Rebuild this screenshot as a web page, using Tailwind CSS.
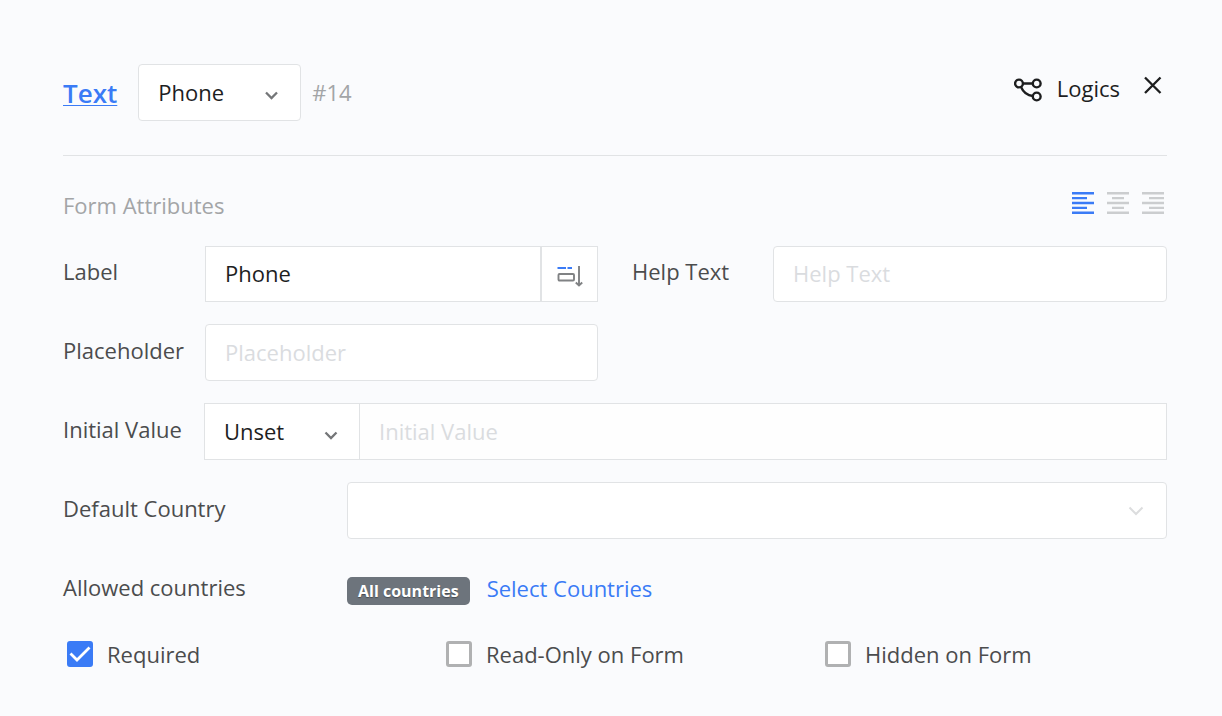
<!DOCTYPE html>
<html lang="en">
<head>
  <meta charset="UTF-8"/>
  <meta name="viewport" content="width=device-width,initial-scale=1.0"/>
  <title>Field Settings – Phone</title>
  <script src="https://cdn.jsdelivr.net/npm/@tailwindcss/browser@4"></script>
</head>
<body class="bg-[#fafbfd] text-[#4b4c4d] font-['Open_Sans',sans-serif] text-[22px] leading-8">

  <form class="pl-[63px] pr-[55px] pt-16 pb-11">

    <!-- HEADER -->
    <header class="flex items-center pb-[34px] border-b border-[#e1e3e5]">
      <a href="#" class="text-[26px] font-semibold text-[#3a7bf6] underline decoration-1 underline-offset-2 mr-[21px]">Text</a>
      <div class="relative">
        <select id="fieldType" aria-label="Field type"
                class="appearance-none w-[163px] h-[57px] pl-[19px] pb-0.5 bg-white border border-[#e1e3e5] rounded text-[#1d1e1f]">
          <option>Phone</option>
          <option>Text</option>
        </select>
        <svg class="absolute right-[22px] top-[26px] w-[14px] h-[10px] pointer-events-none" viewBox="0 0 14 10" fill="none" stroke="#747678" stroke-width="2.300">
          <path d="M1 2.500L6.500 8L12 2.500"/>
        </svg>
      </div>
      <span class="ml-[11px] pb-0.5 text-[#a3a5a7]">#14</span>

      <div class="flex items-center ml-auto pb-2 text-[#1d1e1f]">
        <button type="button" class="flex items-center gap-[15px]">
          <svg class="w-7 h-[26px]" viewBox="0 0 28 26" fill="none" stroke="#1d1e1f" stroke-width="2.400">
            <circle cx="5" cy="7.500" r="3.900"/>
            <circle cx="22.700" cy="7.500" r="3.900"/>
            <circle cx="22.700" cy="20.500" r="3.900"/>
            <path d="M9 7.500H18.800M7 11C9 15.500 13 19.500 18.800 20"/>
          </svg>
          <span class="pb-0.5">Logics</span>
        </button>
        <button type="button" aria-label="Close" class="ml-6 mr-[5px] pb-2">
          <svg class="w-[18px] h-[18px]" viewBox="0 0 18 18" fill="none" stroke="#1d1e1f" stroke-width="2.300">
            <path d="M1 1.500L16.500 17M16.500 1.500L1 17"/>
          </svg>
        </button>
      </div>
    </header>

    <!-- SECTION TITLE + ALIGNMENT -->
    <div class="flex items-center justify-between pt-[33px] pb-[23px]">
      <h2 class="pb-0.5 text-[#a3a5a7]">Form Attributes</h2>
      <div class="flex gap-[13px] pr-[3px] pb-1.5">
        <button type="button" aria-label="Align left">
          <svg class="w-[22px] h-[22px]" viewBox="0 0 22 22" stroke="#3a7bf6" stroke-width="2.400">
            <path d="M0 1.200H22M0 6.100H15M0 11H22M0 15.900H15M0 20.800H22"/>
          </svg>
        </button>
        <button type="button" aria-label="Align center">
          <svg class="w-[22px] h-[22px]" viewBox="0 0 22 22" stroke="#cbcdcf" stroke-width="2.400">
            <path d="M0 1.200H22M5 6.100H17M0 11H22M5 15.900H17M0 20.800H22"/>
          </svg>
        </button>
        <button type="button" aria-label="Align right">
          <svg class="w-[22px] h-[22px]" viewBox="0 0 22 22" stroke="#cbcdcf" stroke-width="2.400">
            <path d="M0 1.200H22M7 6.100H22M0 11H22M7 15.900H22M0 20.800H22"/>
          </svg>
        </button>
      </div>
    </div>

    <!-- FIELDS -->
    <div class="grid grid-cols-2 gap-x-[34px] gap-y-[22px]">
      <div class="flex items-center h-14">
        <label for="label" class="w-[142px] shrink-0 pb-1.5">Label</label>
        <input id="label" type="text" value="Phone"
               class="flex-1 min-w-0 h-full px-[19px] pb-0.5 bg-white border border-[#e1e3e5] text-[#1d1e1f]"/>
        <button type="button" aria-label="Insert variable"
                class="flex items-center justify-center w-[57px] h-full pt-1 bg-white border border-[#e1e3e5]">
          <svg class="w-[26px] h-[22px]" viewBox="0 0 26 22" fill="none" stroke="#808284" stroke-width="1.900">
            <path d="M0.500 3H9M10.500 3H15" stroke="#3a7bf6" stroke-width="2"/>
            <rect x="1.500" y="9" width="15.500" height="6.500" rx="1"/>
            <path d="M22 1V20.500M18.800 17.500L22 20.500L25.200 17.500"/>
          </svg>
        </button>
      </div>

      <div class="flex items-center h-14">
        <label for="helpText" class="w-[141px] shrink-0 pb-1.5">Help Text</label>
        <input id="helpText" type="text" placeholder="Help Text"
               class="flex-1 min-w-0 h-full px-[19px] pb-0.5 bg-white border border-[#e1e3e5] rounded placeholder:text-[#dadcdf]"/>
      </div>

      <div class="flex items-center h-[57px]">
        <label for="placeholder" class="w-[142px] shrink-0 pb-1.5">Placeholder</label>
        <input id="placeholder" type="text" placeholder="Placeholder"
               class="flex-1 min-w-0 h-full px-[19px] pb-0.5 bg-white border border-[#e1e3e5] rounded placeholder:text-[#dadcdf]"/>
      </div>

      <div class="col-span-2 flex items-center h-[57px]">
        <label for="initialValue" class="w-[141px] shrink-0 pb-1.5">Initial Value</label>
        <div class="relative h-full">
          <select id="initialType" aria-label="Initial value type"
                  class="appearance-none w-[156px] h-full pl-[19px] pb-0.5 bg-white border border-[#e1e3e5] text-[#1d1e1f]">
            <option>Unset</option>
            <option>Static</option>
          </select>
          <svg class="absolute right-[22px] top-[27px] w-[14px] h-[10px] pointer-events-none" viewBox="0 0 14 10" fill="none" stroke="#747678" stroke-width="2.300">
            <path d="M1.500 2.500L7 8L12.500 2.500"/>
          </svg>
        </div>
        <input id="initialValue" type="text" placeholder="Initial Value" disabled
               class="flex-1 min-w-0 h-full -ml-px px-[19px] pb-0.5 bg-[#fefefe] border border-[#e1e3e5] placeholder:text-[#dadcdf]"/>
      </div>

      <div class="col-span-2 flex items-center h-[57px]">
        <label for="country" class="w-[284px] shrink-0 pb-1.5">Default Country</label>
        <div class="relative flex-1 h-full">
          <select id="country" class="appearance-none w-full h-full px-[19px] bg-white border border-[#e1e3e5] rounded text-[#1d1e1f]">
            <option></option>
            <option>Canada</option>
            <option>United States</option>
          </select>
          <svg class="absolute right-[23px] top-[24px] w-4 h-[10px] pointer-events-none" viewBox="0 0 16 10" fill="none" stroke="#dcddde" stroke-width="2">
            <path d="M1.500 1.500L8 8L14.500 1.500"/>
          </svg>
        </div>
      </div>
    </div>

    <!-- ALLOWED COUNTRIES -->
    <div class="flex items-center mt-8">
      <span class="w-[284px] shrink-0 pb-0.5">Allowed countries</span>
      <span class="px-[11px] mt-1.5 bg-[#6d747c] rounded-[5px] text-white text-base leading-7 font-bold text-shadow-[0_1px_1px_rgb(0_0_0/0.35)]">All countries</span>
      <a href="#" class="ml-[17px] text-[#3a7bf6]">Select Countries</a>
    </div>

    <!-- FLAGS -->
    <div class="grid grid-cols-3 gap-x-[37px] mt-[33px] pl-1">
      <label class="flex items-center gap-[14px]">
        <span class="relative flex">
          <input type="checkbox" checked class="peer appearance-none w-[26px] h-[26px] border-[3px] border-[#b0b1b2] rounded-[3px] bg-white checked:bg-[#3a7bf6] checked:border-[#3a7bf6]"/>
          <svg class="absolute inset-0 w-[26px] h-[26px] hidden peer-checked:block pointer-events-none" viewBox="0 0 26 26" fill="none" stroke="#fff" stroke-width="2.800">
            <path d="M3.500 12.500L10 19L22.500 6.500"/>
          </svg>
        </span>
        Required
      </label>
      <label class="flex items-center gap-[14px]">
        <input type="checkbox" class="appearance-none w-[26px] h-[26px] border-[3px] border-[#b0b1b2] rounded-[3px] bg-white"/>
        Read-Only on Form
      </label>
      <label class="flex items-center gap-[14px]">
        <input type="checkbox" class="appearance-none w-[26px] h-[26px] border-[3px] border-[#b0b1b2] rounded-[3px] bg-white"/>
        Hidden on Form
      </label>
    </div>

  </form>

</body>
</html>
